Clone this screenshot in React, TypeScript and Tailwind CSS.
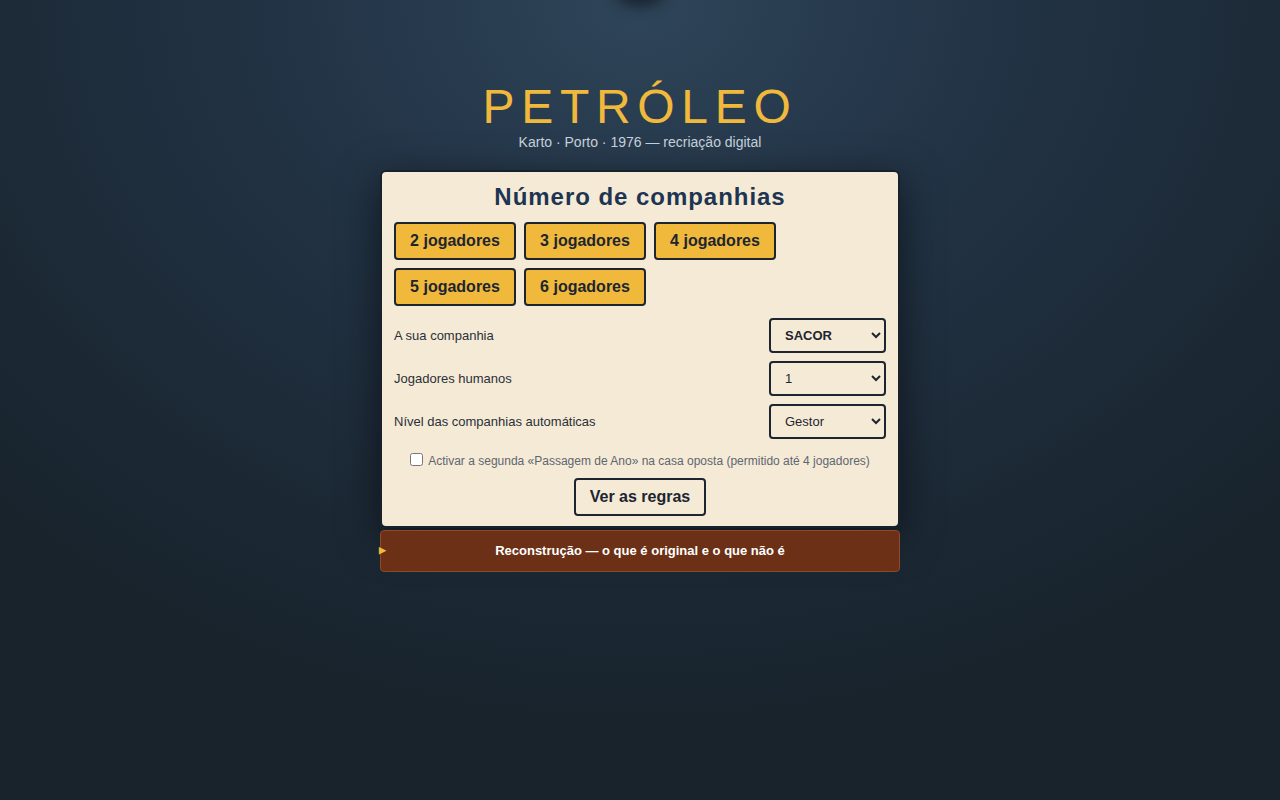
export default function App() {
  const players = ["2 jogadores", "3 jogadores", "4 jogadores", "5 jogadores", "6 jogadores"];

  return (
    <div className="relative min-h-[800px] overflow-hidden bg-[radial-gradient(ellipse_70%_90%_at_50%_0%,#2f4559_0%,#223345_40%,#18232c_100%)] font-['Liberation_Sans',Arial,sans-serif]">
      {/* shadow of something parked above the viewport */}
      <div className="absolute left-1/2 top-[-30px] h-[30px] w-[40px] -translate-x-1/2 rounded-full bg-[#1c2733] shadow-[0_0_14px_6px_rgba(15,22,30,0.7)]" />

      <div className="flex flex-col items-center pt-[83px]">
        <h1 className="text-[48px] leading-[48px] tracking-[0.14em] text-[#f0b93b]">PETRÓLEO</h1>
        <p className="mt-[1px] text-[14px] leading-[20px] text-[#c9d2dc]">Karto · Porto · 1976 — recriação digital</p>

        <div className="mt-[18px] w-[520px] rounded-[6px] border-2 border-[#17222d] bg-[#f5ead6] px-[12px] pt-[10px] pb-[10px] shadow-[0_10px_40px_rgba(0,0,0,0.55)]">
          <h2 className="text-center text-[24px] font-bold leading-[30px] tracking-[0.04em] text-[#1d3552]">Número de companhias</h2>

          <div className="mt-[10px] flex w-[400px] flex-wrap gap-[8px]">
            {players.map((p) => (
              <button
                key={p}
                className="h-[38px] w-[122px] rounded-[4px] border-2 border-[#1c2530] bg-[#f1b93b] text-[16px] font-bold text-[#1c2530]"
              >
                {p}
              </button>
            ))}
          </div>

          <div className="mt-[12px] flex flex-col gap-[8px]">
            <Row label="A sua companhia" value="SACOR" bold />
            <Row label="Jogadores humanos" value="1" />
            <Row label="Nível das companhias automáticas" value="Gestor" />
          </div>

          <label className="mt-[14px] flex items-center justify-center gap-[5px] text-[12px] leading-[16px] text-[#5e6670]">
            <input type="checkbox" className="m-0 h-[13px] w-[13px] -translate-y-[2px]" />
            <span>Activar a segunda «Passagem de Ano» na casa oposta (permitido até 4 jogadores)</span>
          </label>

          <div className="mt-[9px] flex justify-center">
            <button className="h-[38px] w-[132px] rounded-[4px] border-2 border-[#1c2530] bg-[#f5ead6] text-[16px] font-bold text-[#1c2530]">
              Ver as regras
            </button>
          </div>
        </div>

        <div className="relative mt-[2px] flex h-[42px] w-[520px] items-center justify-center rounded-[4px] border border-[#8a4a2c] bg-[#6b3015] text-[13px] font-bold text-white">
          <span className="absolute left-[-2px] top-1/2 -translate-y-1/2 text-[9px] text-[#f0b93b]">▶</span>
          Reconstrução — o que é original e o que não é
        </div>
      </div>
    </div>
  );
}

function Row({ label, value, bold }: { label: string; value: string; bold?: boolean }) {
  return (
    <div className="flex items-center justify-between">
      <span className="text-[13px] text-[#2a3038]">{label}</span>
      <select
        defaultValue={value}
        className={`h-[35px] w-[117px] rounded-[4px] border-2 border-[#1c2530] bg-[#f5ead6] pl-[10px] text-[13px] text-[#1c2530] ${bold ? "font-bold" : "font-normal"}`}
      >
        <option>{value}</option>
      </select>
    </div>
  );
}
